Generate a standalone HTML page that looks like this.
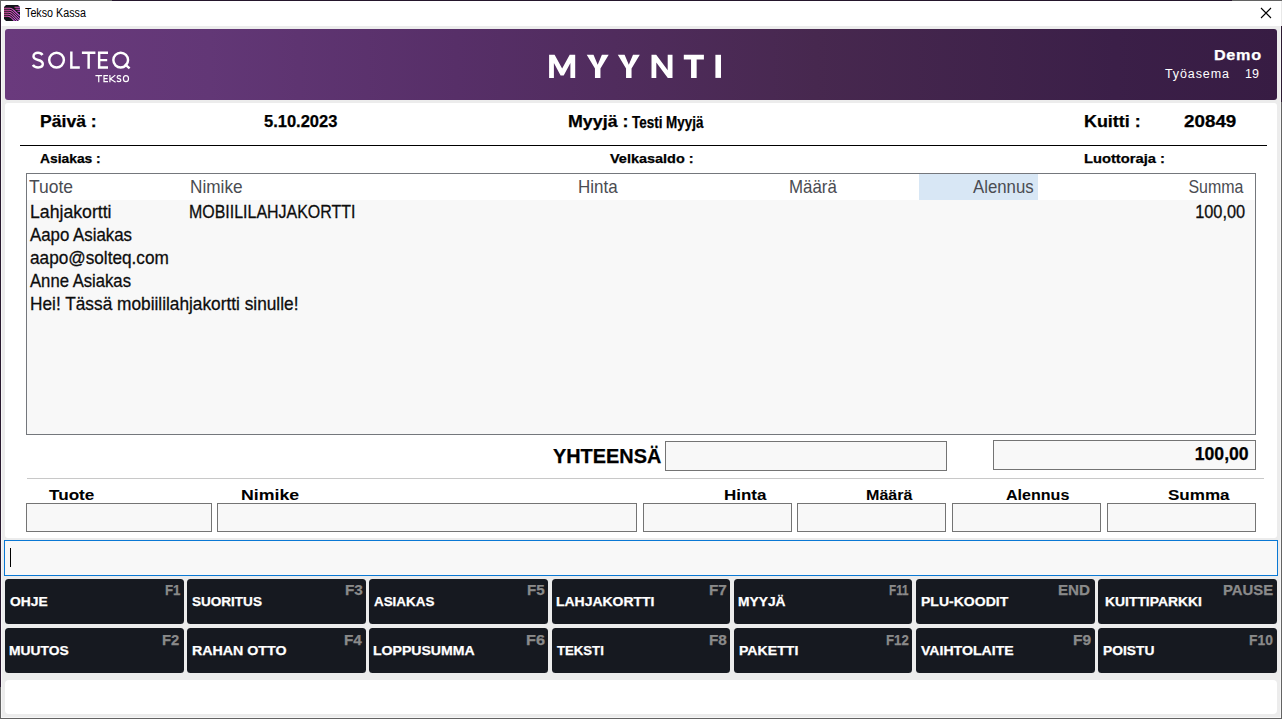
<!DOCTYPE html>
<html><head><meta charset="utf-8">
<style>
html,body{margin:0;padding:0;}
body{width:1282px;height:719px;overflow:hidden;position:relative;background:#ececec;font-family:"Liberation Sans",sans-serif;}
.a{position:absolute;}
.t{position:absolute;white-space:pre;line-height:1;transform-origin:0 0;}
.r{transform-origin:100% 0;}
.b{font-weight:700;-webkit-text-stroke:0.25px currentColor;}
.box{position:absolute;box-sizing:border-box;border:1px solid #747474;background:#f8f8f8;}
.btn{position:absolute;width:178.5px;height:44.8px;background:#161920;border-radius:3.5px;}
.bl{position:absolute;left:5px;top:18px;color:#fff;font-weight:700;font-size:13px;line-height:1;white-space:pre;transform-origin:0 0;}
.fk{position:absolute;right:4px;top:6px;color:#8b8b8b;font-weight:700;font-size:13.5px;line-height:1;white-space:pre;transform-origin:100% 0;}
</style></head><body>
<!-- window border -->
<div class="a" style="left:0;top:0;width:1282px;height:719px;box-sizing:border-box;border:1px solid #636363;"></div>
<div class="a" style="left:112px;top:0;width:1120px;height:1px;background:#24162c;"></div>
<div class="a" style="left:0;top:12px;width:1px;height:675px;background:#2a1a30;"></div>
<div class="a" style="left:1px;top:26px;width:1px;height:691px;background:#f7f7f7;"></div>
<div class="a" style="left:1280px;top:26px;width:1px;height:691px;background:#f5f5f5;"></div>
<div class="a" style="left:1px;top:717px;width:1280px;height:1px;background:#f7f7f7;"></div>
<div class="a" style="left:1281px;top:1px;width:1px;height:25px;background:#e8e8e8;"></div>
<div class="a" style="left:1281px;top:26px;width:1px;height:76px;background:#2b1a30;"></div>
<div class="a" style="left:1px;top:1px;width:1280px;height:25px;background:#fff;"></div>
<!-- app icon -->
<svg class="a" style="left:4px;top:5px" width="16" height="16" viewBox="0 0 16 16">
<defs><linearGradient id="ig" x1="0" y1="0" x2="1" y2="0"><stop offset="0" stop-color="#e04f9c"/><stop offset="1" stop-color="#cf5ee8"/></linearGradient>
<clipPath id="ic"><path d="M2 0 H14 L16 2 V14 L14 16 H2 L0 14 V2 Z"/></clipPath></defs>
<path d="M2 0 H14 L16 2 V14 L14 16 H2 L0 14 V2 Z" fill="#12141a"/>
<g clip-path="url(#ic)" stroke="url(#ig)" stroke-width="1.05" fill="none">
<path d="M0 3.3 H6 C7.5 3.3 8.5 4 9.5 5 L16 11"/>
<path d="M0 5.3 H5.5 C7 5.3 8 6 9 7 L16 14"/>
<path d="M0 7.3 H5 C6.5 7.3 7.5 8 8.5 9 L16 16.5"/>
<path d="M0 9.3 H4.5 C6 9.3 7 10 8 11 L13.5 16.5"/>
<path d="M0 11.3 H4 C5.5 11.3 6.5 12 7.5 13 L11 16.5"/>
<path d="M10.5 2.3 H16 M11.5 4.3 H16 M13.5 6.3 H16"/>
</g></svg>
<div class="t" style="left:25px;top:7px;font-size:12.5px;color:#000;transform:scaleX(0.86)">Tekso Kassa</div>
<!-- close X -->
<svg class="a" style="left:1260px;top:7px" width="12" height="12" viewBox="0 0 12 12"><path d="M1 1 L11 11 M11 1 L1 11" stroke="#000" stroke-width="1.1"/></svg>

<!-- header -->
<div class="a" style="left:5px;top:29px;width:1272px;height:71px;border-radius:3px;background:linear-gradient(90deg,#6a3a7d 0%,#623776 16%,#572f68 35.5%,#47284f 63.8%,#3b1f48 87.3%,#371c43 100%);"></div>
<svg class="a" style="left:0;top:0" width="140" height="90" viewBox="0 0 140 90"><g fill="none" stroke="#fff" stroke-width="2.45">
<path d="M42.5 55 C41.6 53.5 40 52.75 38 52.75 C35.4 52.75 33.5 54.2 33.5 56.3 C33.5 58.5 35.5 59.4 38.1 60 C40.9 60.7 42.8 61.7 42.8 64.1 C42.8 66.3 40.8 67.45 38.1 67.45 C35.7 67.45 33.9 66.6 32.9 64.9"/>
<circle cx="56.55" cy="60.1" r="7.35"/>
<path d="M71.35 51.5 V67.45 H79.8"/>
<path d="M81.9 52.75 H95.4 M88.65 52.75 V68.7"/>
<path d="M108 52.75 H99.15 V67.45 H108 M99.15 60.1 H107.2"/>
<circle cx="120.7" cy="60.1" r="7.35"/>
<path d="M124.8 64.2 L129.6 68.4"/>
</g><g fill="none" stroke="#fff" stroke-width="1.2">
<path d="M95.4 75.7 H102.1 M98.75 75.7 V82.2"/>
<path d="M108 75.7 H104 V81.6 H108 M104 78.65 H107.5"/>
<path d="M109.9 75.1 V82.2 M115.3 75.1 L110.4 79 L115.6 82.2"/>
<path d="M121 76.3 C120.5 75.8 119.8 75.7 119 75.7 C117.9 75.7 117.1 76.3 117.1 77.2 C117.1 78.1 118 78.5 119 78.7 C120.1 78.9 120.9 79.4 120.9 80.3 C120.9 81.2 120.1 81.6 119 81.6 C118 81.6 117.3 81.3 116.9 80.7"/>
<ellipse cx="125.95" cy="78.65" rx="2.55" ry="2.95"/>
</g></svg>
<svg class="a" style="left:0;top:0" width="800" height="100" viewBox="0 0 800 100"><g fill="#fff"><polygon points="549.1,77.9 549.1,54.8 554.6,54.8 562.15,68.39999999999999 569.7,54.8 575.2,54.8 575.2,77.9 570.4,77.9 570.4,63.0 563.7,75.4 560.6,75.4 553.9,63.0 553.9,77.9"/><polygon points="586.7,54.8 593.5,54.8 597.7,64.8 601.9000000000001,54.8 608.7,54.8 600.45,68.6 600.45,77.9 594.95,77.9 594.95,68.6"/><polygon points="617.8,54.8 624.5999999999999,54.8 628.8,64.8 633.0,54.8 639.8,54.8 631.55,68.6 631.55,77.9 626.05,77.9 626.05,68.6"/><polygon points="651.5,77.9 651.5,54.8 656.2,54.8 667.7,70.3 667.7,54.8 672.5,54.8 672.5,77.9 667.8,77.9 656.3,62.4 656.3,77.9"/><polygon points="683.8,54.8 703.9,54.8 703.9,59.5 696.65,59.5 696.65,77.9 691.05,77.9 691.05,59.5 683.8,59.5"/><rect x="715.4" y="54.8" width="5.6" height="23.1"/></g></svg>
<div class="t b" style="left:1214.3px;top:48px;font-size:14px;color:#fff;letter-spacing:0.6px;transform:scaleX(1.155)">Demo</div>
<div class="t" style="left:1165px;top:68px;font-size:12.5px;color:#fff;letter-spacing:0.9px;">Työasema</div>
<div class="t" style="left:1245px;top:68px;font-size:12.5px;color:#fff;">19</div>

<!-- main white panel -->
<div class="a" style="left:5px;top:103px;width:1272px;height:435px;border-radius:3px;background:#fff;"></div>
<div class="t b" style="left:40px;top:113px;font-size:16.3px;color:#000;transform:scaleX(1.08)">Päivä :</div>
<div class="t b" style="left:264px;top:113px;font-size:16.5px;color:#000;">5.10.2023</div>
<div class="t b" style="left:567.8px;top:113px;font-size:16.3px;color:#000;transform:scaleX(1.095)">Myyjä :</div>
<div class="t b" style="left:632px;top:114.3px;font-size:16.2px;color:#000;transform:scaleX(0.83)">Testi Myyjä</div>
<div class="t b" style="left:1084px;top:113px;font-size:16.3px;color:#000;transform:scaleX(1.1)">Kuitti :</div>
<div class="t b" style="left:1184.2px;top:113px;font-size:16.3px;color:#000;transform:scaleX(1.155)">20849</div>
<div class="a" style="left:20px;top:145px;width:1247px;height:1px;background:#000;"></div>
<div class="t b" style="left:40px;top:152.7px;font-size:12.8px;color:#000;transform:scaleX(1.08)">Asiakas :</div>
<div class="t b" style="left:610px;top:152.7px;font-size:12.8px;color:#000;transform:scaleX(1.13)">Velkasaldo :</div>
<div class="t b" style="left:1084px;top:152.7px;font-size:12.8px;color:#000;transform:scaleX(1.15)">Luottoraja :</div>

<!-- table -->
<div class="a" style="left:26px;top:173px;width:1230px;height:262px;box-sizing:border-box;border:1px solid #74777c;background:#f8f8f8;"></div>
<div class="a" style="left:27px;top:174px;width:1228px;height:26px;background:#fff;"></div>
<div class="a" style="left:919px;top:174px;width:119px;height:26px;background:#d8e7f5;"></div>

<div class="t" style="left:29.3px;top:176.9px;font-size:19px;color:#4a4c52;transform:scaleX(0.92)">Tuote</div>
<div class="t" style="left:190.2px;top:176.9px;font-size:19px;color:#4a4c52;transform:scaleX(0.905)">Nimike</div>
<div class="t" style="left:577.6px;top:176.9px;font-size:19px;color:#4a4c52;transform:scaleX(0.893)">Hinta</div>
<div class="t" style="left:789px;top:176.9px;font-size:19px;color:#4a4c52;transform:scaleX(0.888)">Määrä</div>
<div class="t r" style="right:248.4px;top:176.9px;font-size:19px;color:#4a4c52;transform:scaleX(0.884)">Alennus</div>
<div class="t r" style="right:38.5px;top:176.9px;font-size:19px;color:#4a4c52;transform:scaleX(0.84)">Summa</div>
<div class="t" style="left:30px;top:202.12px;font-size:19px;color:#0d0d0d;-webkit-text-stroke:0.3px #0d0d0d;transform:scaleX(0.93)">Lahjakortti</div>
<div class="t" style="left:188.5px;top:202.12px;font-size:19px;color:#0d0d0d;-webkit-text-stroke:0.3px #0d0d0d;transform:scaleX(0.84)">MOBIILILAHJAKORTTI</div>
<div class="t r" style="right:36.5px;top:202.12px;font-size:19px;color:#0d0d0d;-webkit-text-stroke:0.3px #0d0d0d;transform:scaleX(0.86)">100,00</div>
<div class="t" style="left:30px;top:225.07px;font-size:19px;color:#0d0d0d;-webkit-text-stroke:0.3px #0d0d0d;transform:scaleX(0.886)">Aapo Asiakas</div>
<div class="t" style="left:30px;top:248.02px;font-size:19px;color:#0d0d0d;-webkit-text-stroke:0.3px #0d0d0d;transform:scaleX(0.905)">aapo@solteq.com</div>
<div class="t" style="left:30px;top:270.97px;font-size:19px;color:#0d0d0d;-webkit-text-stroke:0.3px #0d0d0d;transform:scaleX(0.877)">Anne Asiakas</div>
<div class="t" style="left:30px;top:293.92px;font-size:19px;color:#0d0d0d;-webkit-text-stroke:0.3px #0d0d0d;transform:scaleX(0.909)">Hei! Tässä mobiililahjakortti sinulle!</div>
<!-- totals -->
<div class="t b" style="left:553px;top:447.1px;font-size:19.8px;color:#000;transform:scaleX(1.005)">YHTEENSÄ</div>
<div class="box" style="left:665px;top:441px;width:282px;height:30px;"></div>
<div class="box" style="left:993px;top:440px;width:263px;height:30px;"></div>
<div class="t b r" style="right:33px;top:443.8px;font-size:19.2px;color:#000;transform:scaleX(0.92)">100,00</div>
<div class="a" style="left:27px;top:478px;width:1237px;height:1px;background:#c8c8c8;"></div>

<!-- input row -->
<div class="t b" style="left:48.50px;top:488.2px;font-size:14.5px;color:#000;-webkit-text-stroke:0.05px #000;transform:scaleX(1.1815)">Tuote</div>
<div class="t b" style="left:240.89px;top:488.2px;font-size:14.5px;color:#000;-webkit-text-stroke:0.05px #000;transform:scaleX(1.2224)">Nimike</div>
<div class="t b" style="left:724.40px;top:488.2px;font-size:14.5px;color:#000;-webkit-text-stroke:0.05px #000;transform:scaleX(1.1718)">Hinta</div>
<div class="t b" style="left:865.50px;top:488.2px;font-size:14.5px;color:#000;-webkit-text-stroke:0.05px #000;transform:scaleX(1.1101)">Määrä</div>
<div class="t b" style="left:1005.70px;top:488.2px;font-size:14.5px;color:#000;-webkit-text-stroke:0.05px #000;transform:scaleX(1.1079)">Alennus</div>
<div class="t b" style="left:1167.98px;top:488.2px;font-size:14.5px;color:#000;-webkit-text-stroke:0.05px #000;transform:scaleX(1.1756)">Summa</div>

<div class="box" style="left:26px;top:503px;width:186px;height:29px;"></div>
<div class="box" style="left:217px;top:503px;width:420px;height:29px;"></div>
<div class="box" style="left:643px;top:503px;width:149px;height:29px;"></div>
<div class="box" style="left:797px;top:503px;width:149px;height:29px;"></div>
<div class="box" style="left:952px;top:503px;width:149px;height:29px;"></div>
<div class="box" style="left:1107px;top:503px;width:149px;height:29px;"></div>

<!-- command input -->
<div class="a" style="left:4px;top:540px;width:1274px;height:36px;box-sizing:border-box;border:1px solid #0a78d4;background:#f8f8f8;"></div>
<div class="a" style="left:10px;top:548px;width:1px;height:19px;background:#000;"></div>

<!-- buttons -->
<div class="btn" style="left:5px;top:579.1px"></div>
<div class="btn" style="left:5px;top:628.3px"></div>
<div class="btn" style="left:187.2px;top:579.1px"></div>
<div class="btn" style="left:187.2px;top:628.3px"></div>
<div class="btn" style="left:369.4px;top:579.1px"></div>
<div class="btn" style="left:369.4px;top:628.3px"></div>
<div class="btn" style="left:551.6px;top:579.1px"></div>
<div class="btn" style="left:551.6px;top:628.3px"></div>
<div class="btn" style="left:733.8px;top:579.1px"></div>
<div class="btn" style="left:733.8px;top:628.3px"></div>
<div class="btn" style="left:916px;top:579.1px"></div>
<div class="btn" style="left:916px;top:628.3px"></div>
<div class="btn" style="left:1098.2px;top:579.1px"></div>
<div class="btn" style="left:1098.2px;top:628.3px"></div>
<div class="t b" style="left:10.40px;top:595.9px;font-size:12.7px;color:#fff;transform:scaleX(1.0887)">OHJE</div>
<div class="t b" style="left:164.87px;top:583.10px;font-size:14.2px;color:#8a8a8a;transform:scaleX(0.9330)">F1</div>
<div class="t b" style="left:9.30px;top:645.4px;font-size:12.7px;color:#fff;transform:scaleX(1.0911)">MUUTOS</div>
<div class="t b" style="left:162.14px;top:632.60px;font-size:14.2px;color:#8a8a8a;transform:scaleX(1.0427)">F2</div>
<div class="t b" style="left:191.52px;top:595.9px;font-size:12.7px;color:#fff;transform:scaleX(1.0663)">SUORITUS</div>
<div class="t b" style="left:344.90px;top:583.10px;font-size:14.2px;color:#8a8a8a;transform:scaleX(1.0816)">F3</div>
<div class="t b" style="left:191.86px;top:645.4px;font-size:12.7px;color:#fff;transform:scaleX(1.1210)">RAHAN OTTO</div>
<div class="t b" style="left:343.94px;top:632.60px;font-size:14.2px;color:#8a8a8a;transform:scaleX(1.0760)">F4</div>
<div class="t b" style="left:374.40px;top:595.9px;font-size:12.7px;color:#fff;transform:scaleX(1.0564)">ASIAKAS</div>
<div class="t b" style="left:526.93px;top:583.10px;font-size:14.2px;color:#8a8a8a;transform:scaleX(1.0686)">F5</div>
<div class="t b" style="left:373.28px;top:645.4px;font-size:12.7px;color:#fff;transform:scaleX(1.1091)">LOPPUSUMMA</div>
<div class="t b" style="left:525.68px;top:632.60px;font-size:14.2px;color:#8a8a8a;transform:scaleX(1.1477)">F6</div>
<div class="t b" style="left:555.69px;top:595.9px;font-size:12.7px;color:#fff;transform:scaleX(1.1002)">LAHJAKORTTI</div>
<div class="t b" style="left:708.91px;top:583.10px;font-size:14.2px;color:#8a8a8a;transform:scaleX(1.0809)">F7</div>
<div class="t b" style="left:556.80px;top:645.4px;font-size:12.7px;color:#fff;transform:scaleX(1.0372)">TEKSTI</div>
<div class="t b" style="left:708.91px;top:632.60px;font-size:14.2px;color:#8a8a8a;transform:scaleX(1.0809)">F8</div>
<div class="t b" style="left:737.70px;top:595.9px;font-size:12.7px;color:#fff;transform:scaleX(1.0868)">MYYJÄ</div>
<div class="t b" style="left:889.38px;top:583.10px;font-size:14.2px;color:#8a8a8a;transform:scaleX(0.8231)">F11</div>
<div class="t b" style="left:738.68px;top:645.4px;font-size:12.7px;color:#fff;transform:scaleX(1.1121)">PAKETTI</div>
<div class="t b" style="left:885.89px;top:632.60px;font-size:14.2px;color:#8a8a8a;transform:scaleX(0.9310)">F12</div>
<div class="t b" style="left:921.3px;top:595.9px;font-size:12.7px;color:#fff;transform:scaleX(1.105)">PLU-KOODIT</div>
<div class="t b" style="left:1058.13px;top:583.10px;font-size:14.2px;color:#8a8a8a;transform:scaleX(1.0690)">END</div>
<div class="t b" style="left:921.00px;top:645.4px;font-size:12.7px;color:#fff;transform:scaleX(1.1108)">VAIHTOLAITE</div>
<div class="t b" style="left:1072.70px;top:632.60px;font-size:14.2px;color:#8a8a8a;transform:scaleX(1.0952)">F9</div>
<div class="t b" style="left:1105.3px;top:595.9px;font-size:12.7px;color:#fff;transform:scaleX(1.094)">KUITTIPARKKI</div>
<div class="t b" style="left:1222.95px;top:583.10px;font-size:14.2px;color:#8a8a8a;transform:scaleX(1.0485)">PAUSE</div>
<div class="t b" style="left:1102.91px;top:645.4px;font-size:12.7px;color:#fff;transform:scaleX(1.0873)">POISTU</div>
<div class="t b" style="left:1248.81px;top:632.60px;font-size:14.2px;color:#8a8a8a;transform:scaleX(0.9748)">F10</div>
<!-- bottom panel -->
<div class="a" style="left:5px;top:680px;width:1272px;height:34px;border-radius:4px;background:#fff;"></div>
</body></html>
